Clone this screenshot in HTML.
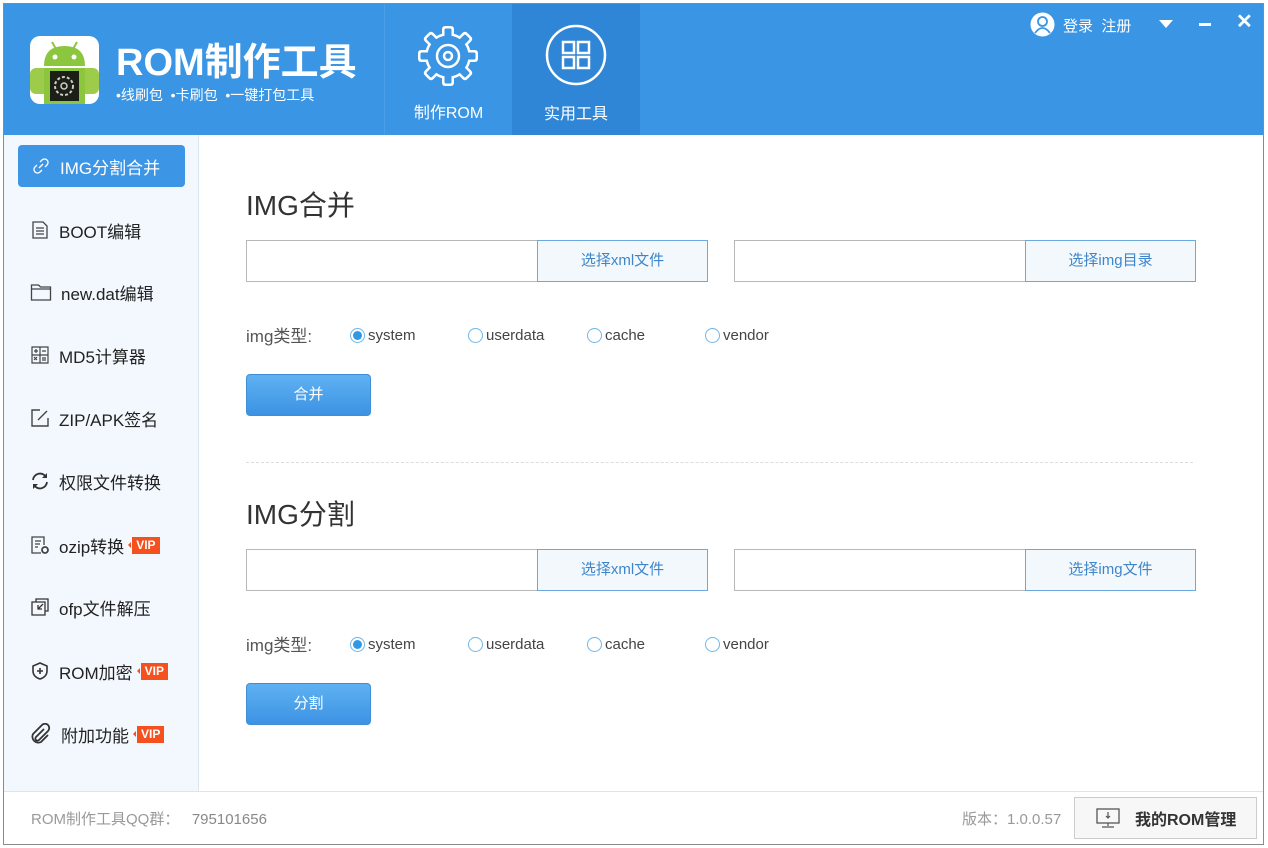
<!DOCTYPE html>
<html><head><meta charset="utf-8"><style>
*{margin:0;padding:0;box-sizing:border-box}
body{width:1268px;height:848px;background:#fff;position:relative;overflow:hidden;font-family:"Liberation Sans","Noto Sans CJK SC",sans-serif;color:#333}
.a{position:absolute}
#frame{left:3px;top:3px;width:1261px;height:842px;border:1px solid #8a8a8a}
#hdr{left:4px;top:4px;width:1259px;height:131px;background:#3a95e4}
.tab{top:4px;height:131px;color:#fff;text-align:center}
.side{left:4px;top:135px;width:195px;height:656px;background:#f2f8fe;border-right:1px solid #dce6f0}
.mi{left:30px;font-size:17px;color:#222;display:flex;align-items:center;height:24px}
.mi svg{margin-right:9px}
.vip{background:#f4511e;color:#fff;font-size:12px;font-weight:bold;padding:1px 4px;margin-left:8px;line-height:15px;position:relative}
.vip:before{content:"";position:absolute;left:-4px;top:5px;border:3px solid transparent;border-right:3px solid #f4511e;border-left:0}
.h{left:246px;font-size:28px;color:#333}
.inp{height:42px;border:1px solid #b8b8b8;background:#fff}
.btn{height:42px;border:1px solid #6aa8de;background:#f3f8fd;color:#3e86c9;font-size:15px;text-align:center;line-height:40px}
.rl{font-size:15px;color:#444;display:flex;align-items:center;height:20px}
.r{width:15px;height:15px;border:1px solid #6fb7e8;border-radius:50%;margin-right:3px;position:relative;background:#fff}
.r.on:after{content:"";position:absolute;left:2px;top:2px;width:9px;height:9px;border-radius:50%;background:#2e9ae6}
.bb{left:246px;width:125px;height:42px;border-radius:4px;background:linear-gradient(#5fb1f2,#3c93e3);border:1px solid #3f8fd6;color:#fff;font-size:15px;text-align:center;line-height:40px}
#foot{left:4px;top:791px;width:1259px;height:53px;border-top:1px solid #e3e3e3;background:#fff}
</style></head><body>
<div class="a" id="hdr"></div>
<div class="a" style="left:30px;top:36px;width:69px;height:68px;background:#fff;border-radius:10px;overflow:hidden">
<svg width="69" height="68" viewBox="0 0 69 68"><path d="M22 6 L26 13 M47 6 L43 13" stroke="#8cc63f" stroke-width="2"/><path d="M14 30 Q14 10 34.5 10 Q55 10 55 30Z" fill="#8cc63f"/><circle cx="25" cy="21" r="2.5" fill="#fff"/><circle cx="44" cy="21" r="2.5" fill="#fff"/><rect x="0" y="32" width="69" height="26" rx="6" fill="#9ccc4a"/><rect x="14" y="32" width="41" height="36" fill="#8cc63f"/><rect x="20" y="35" width="29" height="30" fill="#1c1f16"/><circle cx="34" cy="50" r="9" fill="none" stroke="#ccc" stroke-width="2" stroke-dasharray="3 2"/><circle cx="34" cy="50" r="3" fill="none" stroke="#ccc" stroke-width="1.5"/></svg></div>
<div class="a" style="left:116px;top:31px;color:#fff;font-size:38px;font-weight:bold">ROM制作工具</div>
<div class="a" style="left:116px;top:85px;color:#fff;font-size:14px">•线刷包 &nbsp;•卡刷包 &nbsp;•一键打包工具</div>
<div class="a" style="left:384px;top:4px;width:1px;height:131px;background:#4b9fe6"></div>
<div class="a tab" style="left:385px;width:127px">
<svg class="a" style="left:31px;top:20px" width="64" height="64" viewBox="-32 -32 64 64">
<g fill="#fff"><circle r="23"/><rect x="-6" y="-30" width="12" height="60" rx="3"/><rect x="-6" y="-30" width="12" height="60" rx="3" transform="rotate(45)"/><rect x="-6" y="-30" width="12" height="60" rx="3" transform="rotate(90)"/><rect x="-6" y="-30" width="12" height="60" rx="3" transform="rotate(135)"/></g>
<g fill="#3a95e4"><circle r="20.5"/><rect x="-3.5" y="-27.5" width="7" height="55" rx="1.5"/><rect x="-3.5" y="-27.5" width="7" height="55" rx="1.5" transform="rotate(45)"/><rect x="-3.5" y="-27.5" width="7" height="55" rx="1.5" transform="rotate(90)"/><rect x="-3.5" y="-27.5" width="7" height="55" rx="1.5" transform="rotate(135)"/></g>
<circle r="11" fill="none" stroke="#fff" stroke-width="2.5"/><circle r="4" fill="none" stroke="#fff" stroke-width="2.5"/></svg>
<div class="a" style="left:0;width:127px;top:95px;font-size:16px">制作ROM</div></div>
<div class="a tab" style="left:512px;width:128px;background:#2f86d6">
<svg class="a" style="left:33px;top:20px" width="62" height="62" viewBox="0 0 62 62"><circle cx="31" cy="31" r="29" fill="none" stroke="#fff" stroke-width="2.5"/><rect x="18" y="18" width="11" height="11" fill="none" stroke="#fff" stroke-width="2.5"/><rect x="33" y="18" width="11" height="11" fill="none" stroke="#fff" stroke-width="2.5"/><rect x="18" y="33" width="11" height="11" fill="none" stroke="#fff" stroke-width="2.5"/><rect x="33" y="33" width="11" height="11" fill="none" stroke="#fff" stroke-width="2.5"/></svg>
<div class="a" style="left:0;width:128px;top:96px;font-size:16px">实用工具</div></div>
<svg class="a" style="left:1030px;top:12px" width="25" height="25" viewBox="0 0 25 25"><circle cx="12.5" cy="12.5" r="12" fill="#fff"/><circle cx="12.5" cy="9.5" r="4.5" fill="none" stroke="#3a95e4" stroke-width="1.8"/><path d="M5 21 Q12.5 11 20 21" fill="none" stroke="#3a95e4" stroke-width="1.8"/></svg>
<div class="a" style="left:1063px;top:15px;color:#fff;font-size:15px">登录 &nbsp;注册</div>
<div class="a" style="left:1159px;top:20px;border:7px solid transparent;border-top:8px solid #fff;border-bottom:0"></div>
<div class="a" style="left:1199px;top:23px;width:12px;height:3px;background:#fff"></div>
<div class="a" style="left:1236px;top:9px;color:#fff;font-size:20px;font-weight:bold">✕</div>
<div class="a side"></div>
<div class="a" style="left:18px;top:145px;width:167px;height:42px;background:#3d95e6;border-radius:4px;color:#fff;font-size:17px;display:flex;align-items:center;padding-left:13px">
<svg width="20" height="20" viewBox="0 0 20 20" style="margin-right:9px"><path d="M8 12 L12 8 M9 6l2-2a3 3 0 0 1 5 5l-2 2 M11 14l-2 2a3 3 0 0 1-5-5l2-2" fill="none" stroke="#fff" stroke-width="1.3"/></svg>IMG分割合并</div>
<div class="a mi" style="top:218px"><svg width="20" height="20" viewBox="0 0 20 20"><path d="M3 2h10l4 4v12H3z M6 8h8M6 11h8M6 14h8" fill="none" stroke="#444" stroke-width="1.3"/></svg>BOOT编辑</div>
<div class="a mi" style="top:280px"><svg width="22" height="20" viewBox="0 0 22 20"><path d="M1.5 3h7l2 2h10v13h-19z M1.5 7h19" fill="none" stroke="#444" stroke-width="1.3"/></svg>new.dat编辑</div>
<div class="a mi" style="top:343px"><svg width="20" height="20" viewBox="0 0 20 20"><path d="M2 2h16v16H2z M10 2v16M2 10h16 M4 6h4M6 4v4M12 6h4M4 12l3 3M7 12l-3 3M12 13h4M12 15h4" fill="none" stroke="#444" stroke-width="1.2"/></svg>MD5计算器</div>
<div class="a mi" style="top:406px"><svg width="20" height="20" viewBox="0 0 20 20"><path d="M10 2H2v16h16v-8 M8 12l9-9" fill="none" stroke="#444" stroke-width="1.4"/></svg>ZIP/APK签名</div>
<div class="a mi" style="top:469px"><svg width="20" height="20" viewBox="0 0 20 20"><path d="M3 9a7 7 0 0 1 13-3 M17 11a7 7 0 0 1-13 3" fill="none" stroke="#333" stroke-width="1.8"/><path d="M17 2v5h-5M3 18v-5h5" fill="#333"/></svg>权限文件转换</div>
<div class="a mi" style="top:533px"><svg width="20" height="20" viewBox="0 0 20 20"><path d="M11 18H2V2h12v8 M5 6h6M5 9h5M5 12h3" fill="none" stroke="#444" stroke-width="1.3"/><circle cx="15" cy="15" r="3" fill="none" stroke="#444" stroke-width="1.8"/></svg>ozip转换<span class="vip">VIP</span></div>
<div class="a mi" style="top:595px"><svg width="20" height="20" viewBox="0 0 20 20"><path d="M6 5H2v13h13v-4 M6 5V2h12v12h-3 M6 5h9v9 M8 12l5-5M8 8v4h4" fill="none" stroke="#333" stroke-width="1.3"/></svg>ofp文件解压</div>
<div class="a mi" style="top:659px"><svg width="20" height="20" viewBox="0 0 20 20"><path d="M10 2l7 3v5c0 4-3 7-7 8-4-1-7-4-7-8V5z" fill="none" stroke="#333" stroke-width="1.6"/><path d="M10 7v6M7 10h6" stroke="#333" stroke-width="1.6"/></svg>ROM加密<span class="vip">VIP</span></div>
<div class="a mi" style="top:722px"><svg width="22" height="22" viewBox="0 0 22 22"><path d="M14 6l-8 8a2 2 0 0 0 3 3l9-9a4 4 0 0 0-6-6l-9 9a6 6 0 0 0 8 8l7-7" fill="none" stroke="#333" stroke-width="1.8"/></svg>附加功能<span class="vip">VIP</span></div>
<div class="a h" style="top:184px">IMG合并</div>
<div class="a inp" style="left:246px;top:240px;width:292px"></div>
<div class="a btn" style="left:537px;top:240px;width:171px">选择xml文件</div>
<div class="a inp" style="left:734px;top:240px;width:292px"></div>
<div class="a btn" style="left:1025px;top:240px;width:171px">选择img目录</div>
<div class="a rl" style="left:246px;top:324px;font-size:17px;color:#555">img类型:</div>
<div class="a rl" style="left:350px;top:325px"><span class="r on"></span>system</div>
<div class="a rl" style="left:468px;top:325px"><span class="r"></span>userdata</div>
<div class="a rl" style="left:587px;top:325px"><span class="r"></span>cache</div>
<div class="a rl" style="left:705px;top:325px"><span class="r"></span>vendor</div>
<div class="a bb" style="top:374px">合并</div>
<div class="a" style="left:246px;top:462px;width:947px;border-top:1px dashed #ddd"></div>
<div class="a h" style="top:493px">IMG分割</div>
<div class="a inp" style="left:246px;top:549px;width:292px"></div>
<div class="a btn" style="left:537px;top:549px;width:171px">选择xml文件</div>
<div class="a inp" style="left:734px;top:549px;width:292px"></div>
<div class="a btn" style="left:1025px;top:549px;width:171px">选择img文件</div>
<div class="a rl" style="left:246px;top:633px;font-size:17px;color:#555">img类型:</div>
<div class="a rl" style="left:350px;top:634px"><span class="r on"></span>system</div>
<div class="a rl" style="left:468px;top:634px"><span class="r"></span>userdata</div>
<div class="a rl" style="left:587px;top:634px"><span class="r"></span>cache</div>
<div class="a rl" style="left:705px;top:634px"><span class="r"></span>vendor</div>
<div class="a bb" style="top:683px">分割</div>
<div class="a" id="foot"></div>
<div class="a" style="left:31px;top:808px;font-size:15px;color:#999">ROM制作工具QQ群： &nbsp;&nbsp;<span style="color:#888">795101656</span></div>
<div class="a" style="left:962px;top:808px;font-size:15px;color:#999">版本：1.0.0.57</div>
<div class="a" style="left:1074px;top:797px;width:183px;height:42px;border:1px solid #ccc;background:#f7f7f7;display:flex;align-items:center;padding-left:20px;font-size:16px;font-weight:bold;color:#333">
<svg width="26" height="22" viewBox="0 0 26 22" style="margin-right:14px"><rect x="2" y="2" width="22" height="14" fill="none" stroke="#555" stroke-width="1.3"/><path d="M13 5v6M11 9l2 2 2-2M13 16v3M7 20h12" fill="none" stroke="#555" stroke-width="1.2"/></svg>我的ROM管理</div>
<div class="a" id="frame"></div>
</body></html>
